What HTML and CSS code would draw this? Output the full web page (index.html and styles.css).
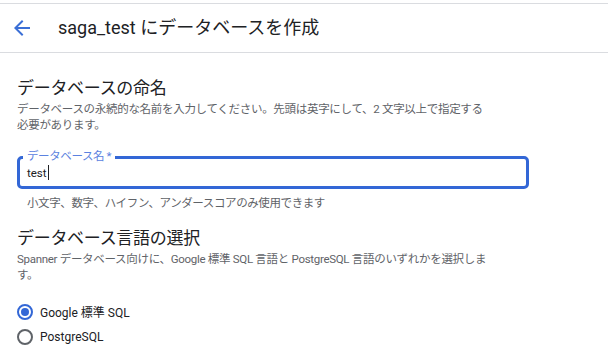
FILE: index.html
```html
<!DOCTYPE html>
<html lang="ja">
<head>
<meta charset="utf-8">
<link rel="stylesheet" href="styles.css">
</head>
<body>
<div class="page">
  <header class="topbar">
    <button class="back" aria-label="戻る">
      <svg width="24" height="24" viewBox="0 0 24 24"><path d="M20 11H7.83l5.59-5.59L12 4l-8 8 8 8 1.41-1.41L7.83 13H20v-2z" fill="#3b6fd6"/></svg>
    </button>
    <h1 class="title">saga_test にデータベースを作成</h1>
  </header>

  <main class="content">
    <section class="sec sec-name">
      <h2 class="heading">データベースの命名</h2>
      <p class="desc">データベースの永続的な名前を入力してください。先頭は英字にして、2 文字以上で指定する<br>必要があります。</p>
      <div class="field">
        <span class="field-label">データベース名 *</span>
        <span class="field-value">test<span class="caret"></span></span>
      </div>
      <p class="helper">小文字、数字、ハイフン、アンダースコアのみ使用できます</p>
    </section>

    <section class="sec sec-lang">
      <h2 class="heading">データベース言語の選択</h2>
      <p class="desc">Spanner データベース向けに、Google 標準 SQL 言語と PostgreSQL 言語のいずれかを選択しま<br>す。</p>
      <div class="radios">
        <label class="radio-row"><span class="radio checked"></span><span class="radio-text">Google 標準 SQL</span></label>
        <label class="radio-row"><span class="radio"></span><span class="radio-text">PostgreSQL</span></label>
      </div>
    </section>
  </main>
</div>
</body>
</html>
```

FILE: styles.css
```css
* { box-sizing: border-box; }
html, body { margin: 0; padding: 0; background: #fff; }
body {
  font-family: Roboto, "Noto Sans CJK JP", sans-serif;
  color: #202124;
  width: 608px;
  height: 354px;
  overflow: hidden;
}
.page { padding-top: 3px; }
.topbar {
  display: flex;
  align-items: center;
  height: 50px;
  border-top: 1px solid #dadce0;
  border-bottom: 1px solid #dadce0;
}
.back {
  display: flex;
  width: 24px;
  height: 24px;
  margin-left: 10px;
  padding: 0;
  border: 0;
  background: none;
}
.title {
  margin: 0 0 0 24px;
  font-size: 18px;
  font-weight: 400;
  line-height: 24px;
  color: #202124;
}
.content { padding-left: 17px; }
.heading {
  margin: 0;
  font-size: 17px;
  font-weight: 400;
  line-height: 22px;
  letter-spacing: -0.3px;
  color: #202124;
}
.sec-name { padding-top: 24px; }
.desc {
  margin: 2px 0 0;
  font-size: 11.5px;
  line-height: 16px;
  letter-spacing: -0.3px;
  color: #5f6368;
}
.field {
  position: relative;
  margin-top: 23px;
  width: 512px;
  height: 33px;
  border: 3px solid #3367d6;
  border-radius: 5px;
  display: flex;
  align-items: center;
  padding-left: 7px;
}
.field-label {
  position: absolute;
  left: 3px;
  top: -11px;
  padding: 0 4px;
  background: #fff;
  font-size: 11.5px;
  line-height: 16px;
  letter-spacing: -0.4px;
  color: #5b82e0;
}
.field-value {
  font-size: 11.5px;
  color: #202124;
  display: flex;
  align-items: center;
}
.caret {
  display: inline-block;
  width: 1px;
  height: 15px;
  background: #202124;
  margin-left: 1px;
}
.helper {
  margin: 6px 0 0 10px;
  font-size: 11.5px;
  line-height: 16px;
  letter-spacing: -0.4px;
  color: #5f6368;
}
.sec-lang { padding-top: 16px; }
.radios {
  margin-top: 16px;
  display: flex;
  flex-direction: column;
}
.radio-row {
  display: flex;
  align-items: center;
  height: 25px;
}
.radio {
  width: 16px;
  height: 16px;
  border: 2px solid #5f6368;
  border-radius: 50%;
  display: flex;
  align-items: center;
  justify-content: center;
}
.radio.checked { border-color: #3367d6; }
.radio.checked::after {
  content: "";
  width: 8px;
  height: 8px;
  border-radius: 50%;
  background: #3367d6;
}
.radio-text {
  margin-left: 7px;
  font-size: 12px;
  color: #202124;
}
```
